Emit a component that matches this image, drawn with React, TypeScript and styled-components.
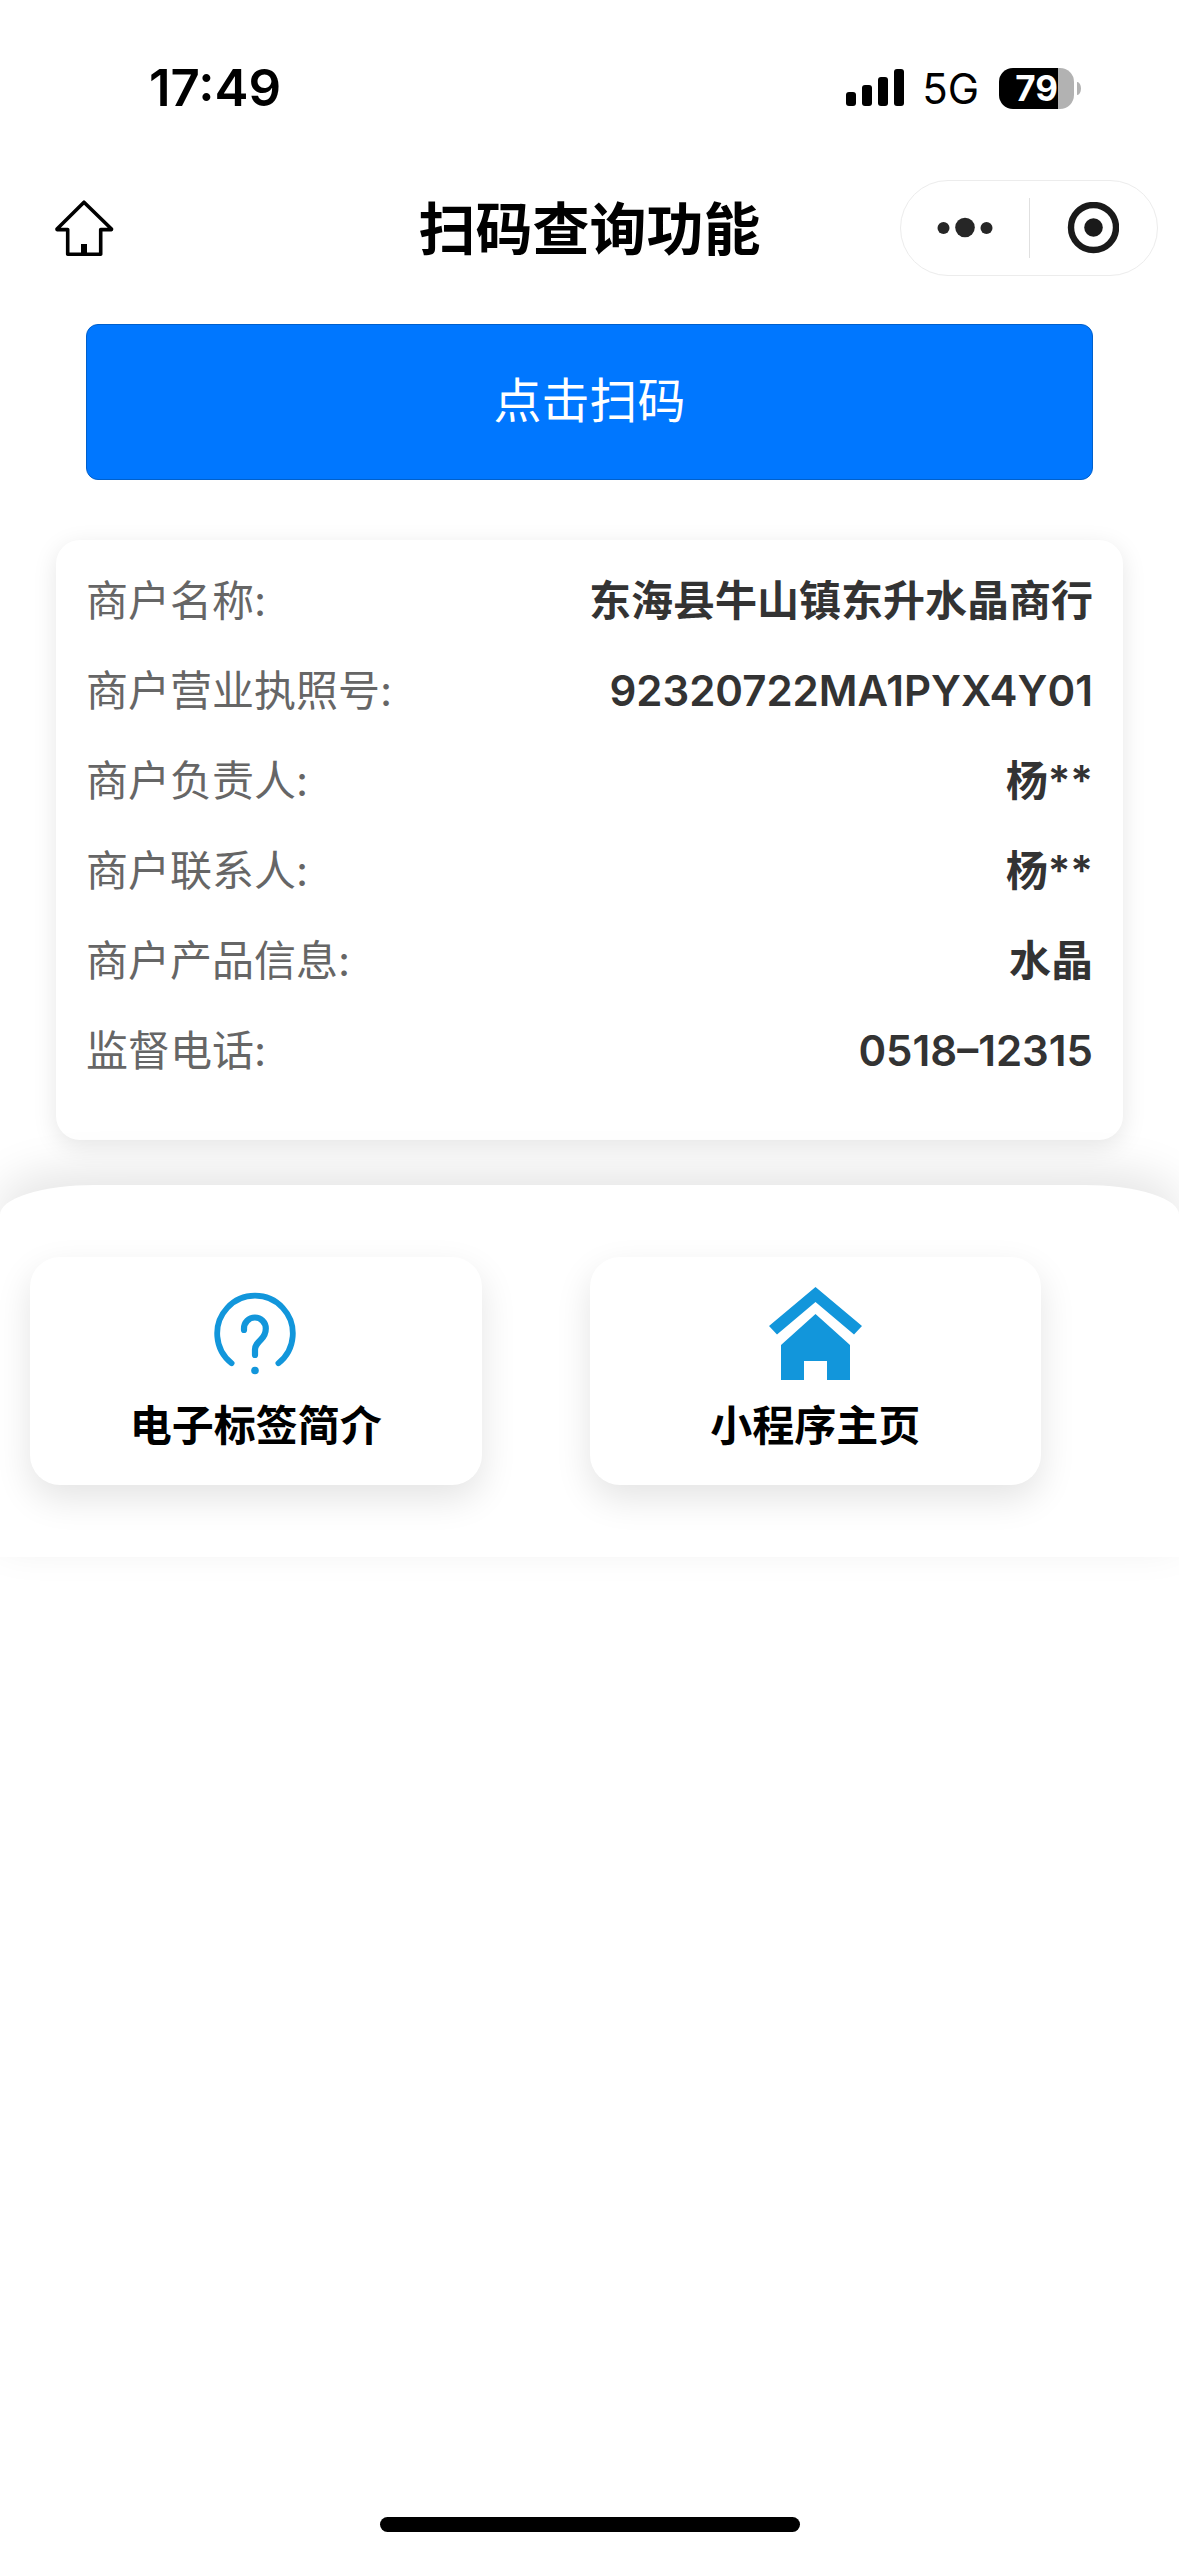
import React from "react";
import styled, { createGlobalStyle } from "styled-components";

const GlobalStyle = createGlobalStyle`
  *, *::before, *::after { box-sizing: border-box; }
  body {
    margin: 0;
    background: #fff;
    color: #000;
    font-family: Inter, "Noto Sans CJK SC", sans-serif;
  }
  button { font: inherit; color: inherit; border: 0; padding: 0; background: none; cursor: pointer; }
`;

const Screen = styled.div`
  min-height: 100vh;
  display: flex;
  flex-direction: column;
  overflow: hidden;
`;

const StatusBar = styled.div`
  height: 176px;
  padding: 0 98px 0 149px;
  display: flex;
  align-items: center;
  justify-content: space-between;
`;

const Clock = styled.time`
  font-size: 51px;
  line-height: 60px;
  font-weight: 600;
`;

const StatusIcons = styled.div`
  display: flex;
  align-items: center;
`;

const Network = styled.span`
  margin: 0 20px 0 18px;
  padding-top: 2px;
  font-size: 42px;
  line-height: 60px;
`;

const Battery = styled.div`
  display: flex;
  align-items: center;
  gap: 3px;
`;

const BatteryBody = styled.div<{ $level: number }>`
  width: 75px;
  height: 41px;
  border-radius: 14px;
  display: flex;
  align-items: center;
  justify-content: center;
  color: #fff;
  font-size: 35px;
  font-weight: 700;
  background: linear-gradient(to right, #000 ${(p) => p.$level}%, #b2b2b2 ${(p) => p.$level}%);
`;

const BatteryTip = styled.div`
  width: 4px;
  height: 13px;
  border-radius: 0 4px 4px 0 / 0 7px 7px 0;
  background: #b2b2b2;
`;

const NavBar = styled.header`
  height: 104px;
  padding: 0 21px;
  display: grid;
  grid-template-columns: 1fr auto 1fr;
  align-items: center;
`;

const NavTitle = styled.h1`
  margin: 0;
  padding-top: 4px;
  font-size: 57px;
  line-height: 80px;
  font-weight: 600;
`;

const HomeButton = styled.button`
  && {
    height: 60px;
    padding-left: 33px;
    display: flex;
    justify-self: start;
  }
`;

const Capsule = styled.div`
  justify-self: end;
  width: 258px;
  height: 96px;
  border: 1px solid #ececec;
  border-radius: 48px;
  display: flex;
  align-items: center;
`;

const CapsuleButton = styled.button`
  flex: 1;
  height: 60px;
  display: flex;
  align-items: center;
  justify-content: center;

  & + & { border-left: 1px solid #e0e0e0; }
`;

const Content = styled.main`
  padding: 44px 56px 45px;
  display: flex;
  flex-direction: column;
  gap: 60px;
`;

const ScanButton = styled.button`
  && {
    margin: 0 30px;
    height: 156px;
    padding-bottom: 10px;
    border: 1px solid #0060cc;
    border-radius: 12px;
    background: #0077ff;
    color: #fff;
    font-size: 48px;
  }
`;

const InfoCard = styled.dl`
  margin: 0;
  padding: 30px 30px 60px;
  border-radius: 24px;
  background: #fff;
  box-shadow: 0 6px 24px rgba(0, 0, 0, 0.1);
  display: flex;
  flex-direction: column;
  gap: 30px;
`;

const InfoRow = styled.div`
  display: flex;
  justify-content: space-between;
  font-size: 42px;
  line-height: 62px;
  height: 60px;
`;

const InfoLabel = styled.dt`
  color: #666;
`;

const InfoValue = styled.dd`
  margin: 0;
  color: #333;
  font-weight: 600;
`;

const ShortcutPanel = styled.nav`
  padding: 72px 30px;
  border-radius: 8% 8% 0 0;
  background: #fff;
  box-shadow: 0 -15px 45px rgba(0, 0, 0, 0.1);
  display: grid;
  grid-template-columns: 1fr 1fr;
`;

const Shortcut = styled.button`
  && {
    margin-right: 108px;
    padding: 30px 0 29px;
    border-radius: 30px;
    background: #fff;
    box-shadow: 0 14px 36px rgba(0, 0, 0, 0.11);
    display: flex;
    flex-direction: column;
    align-items: center;
    gap: 16px;
    font-size: 42px;
    line-height: 60px;
    font-weight: 600;
  }
`;

const HomeIndicator = styled.div`
  width: 420px;
  height: 15px;
  margin: auto auto 24px;
  border-radius: 8px;
  background: #000;
`;

const SignalIcon = () => (
  <svg width="58" height="38" viewBox="0 0 58 38" aria-hidden="true">
    <rect x="0" y="23" width="10" height="14" rx="3" />
    <rect x="16" y="16" width="10" height="21" rx="3" />
    <rect x="32" y="8" width="10" height="29" rx="3" />
    <rect x="48" y="0" width="10" height="37" rx="3" />
  </svg>
);

const HomeOutlineIcon = () => (
  <svg width="60" height="60" viewBox="0 0 60 60" aria-hidden="true">
    <path
      d="M30 4.2 L57.5 31 V31.6 H46.7 V56.3 H13.7 V31.600 H3 V31 Z"
      fill="none"
      stroke="#000"
      strokeWidth="3.6"
      strokeLinejoin="round"
    />
    <rect x="27" y="46" width="6" height="10" />
  </svg>
);

const MoreIcon = () => (
  <svg width="56" height="22" viewBox="0 0 56 22" fill="#262626" aria-hidden="true">
    <circle cx="6.5" cy="11" r="6" />
    <circle cx="28" cy="10.5" r="9.8" />
    <circle cx="49.5" cy="11" r="6" />
  </svg>
);

const CloseIcon = () => (
  <svg width="52" height="52" viewBox="0 0 52 52" aria-hidden="true">
    <circle cx="26.5" cy="25.5" r="22.5" fill="none" stroke="#1a1a1a" strokeWidth="6.4" />
    <circle cx="26.5" cy="25.5" r="9.3" fill="#1a1a1a" />
  </svg>
);

const QuestionIcon = () => (
  <svg width="93" height="93" viewBox="0 0 93 93" aria-hidden="true">
    <g fill="none" stroke="#1296db" strokeWidth="5.8" strokeLinecap="round">
      <path d="M22.6 76.2 A37.8 37.8 0 1 1 69.4 76.2" />
      <path
        strokeWidth="6.2"
        d="M35 43 V41.5 A10.9 11 0 0 1 56.8 41.5 C56.8 46 55 49.5 52 52.5 C48.5 56 46 58.5 46 62.5 V68"
      />
    </g>
    <circle cx="46" cy="83.5" r="3.8" fill="#1296db" />
  </svg>
);

const HouseIcon = () => (
  <svg width="93" height="93" viewBox="0 0 93 93" fill="#1296db" aria-hidden="true">
    <path d="M46.5 0 L93 39 L85 47.5 L46.5 15 L8 47.5 L0 39 Z" />
    <path d="M46.5 27 L81 58 V93 H58 V74 H35 V93 H12 V58 Z" />
  </svg>
);

const merchant = [
  { label: "商户名称", value: "东海县牛山镇东升水晶商行" },
  { label: "商户营业执照号", value: "92320722MA1PYX4Y01" },
  { label: "商户负责人", value: "杨**" },
  { label: "商户联系人", value: "杨**" },
  { label: "商户产品信息", value: "水晶" },
  { label: "监督电话", value: "0518–12315" },
];

const shortcuts = [
  { title: "电子标签简介", Icon: QuestionIcon },
  { title: "小程序主页", Icon: HouseIcon },
];

export default function App() {
  return (
    <Screen lang="zh-CN">
      <GlobalStyle />
      <StatusBar>
        <Clock>17:49</Clock>
        <StatusIcons>
          <SignalIcon />
          <Network>5G</Network>
          <Battery>
            <BatteryBody $level={79}>79</BatteryBody>
            <BatteryTip />
          </Battery>
        </StatusIcons>
      </StatusBar>
      <NavBar>
        <HomeButton aria-label="首页">
          <HomeOutlineIcon />
        </HomeButton>
        <NavTitle>扫码查询功能</NavTitle>
        <Capsule>
          <CapsuleButton aria-label="更多">
            <MoreIcon />
          </CapsuleButton>
          <CapsuleButton aria-label="关闭">
            <CloseIcon />
          </CapsuleButton>
        </Capsule>
      </NavBar>
      <Content>
        <ScanButton>点击扫码</ScanButton>
        <InfoCard>
          {merchant.map(({ label, value }) => (
            <InfoRow key={label}>
              <InfoLabel>{label}:</InfoLabel>
              <InfoValue>{value}</InfoValue>
            </InfoRow>
          ))}
        </InfoCard>
      </Content>
      <ShortcutPanel>
        {shortcuts.map(({ title, Icon }) => (
          <Shortcut key={title}>
            <Icon />
            {title}
          </Shortcut>
        ))}
      </ShortcutPanel>
      <HomeIndicator />
    </Screen>
  );
}
